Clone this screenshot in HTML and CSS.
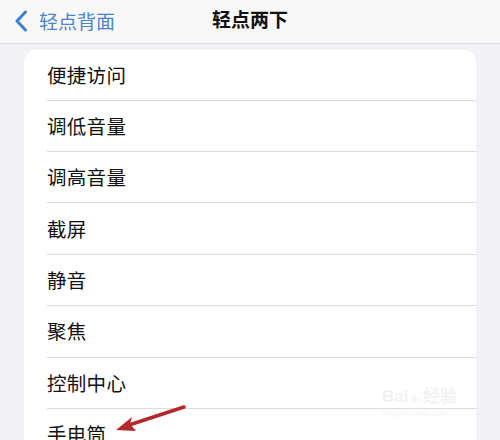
FILE: index.html
```html
<!DOCTYPE html>
<html lang="zh-CN">
<head>
    <meta charset="UTF-8">
    <meta name="viewport" content="width=device-width, initial-scale=1.0">
    <title>轻点两下</title>
    <link rel="stylesheet" href="styles.css">
</head>
<body>
    <div class="nav-bar">
        <a class="back" href="#">
            <svg class="chevron" width="14" height="22" viewBox="0 0 14 22">
                <path d="M11.5 2 L3 11 L11.5 20" fill="none" stroke="#3d7fd0" stroke-width="3" stroke-linecap="round" stroke-linejoin="round"/>
            </svg>
            <span>轻点背面</span>
        </a>
        <h1>轻点两下</h1>
    </div>

    <div class="content">
        <ul class="list">
            <li>便捷访问</li>
            <li>调低音量</li>
            <li>调高音量</li>
            <li>截屏</li>
            <li>静音</li>
            <li>聚焦</li>
            <li>控制中心</li>
            <li>手电筒</li>
        </ul>
    </div>

    <!-- annotation arrow -->
    <svg class="arrow" width="500" height="440" viewBox="0 0 500 440">
        <path d="M184 407 L126 426" stroke="#b3282b" stroke-width="3.5" stroke-linecap="round"/>
        <path d="M116 430 L132 417 L130 424 L136 431 Z" fill="#b3282b"/>
    </svg>

    <div class="watermark">
        <div class="wm-logo">Bai<span class="paw">du</span>经验</div>
        <div class="wm-url">jingyan.baidu.com</div>
    </div>
</body>
</html>
```

FILE: styles.css
```css
body {
    margin: 0;
    background: #f2f2f7;
    font-family: "Noto Sans CJK SC", "Noto Sans", sans-serif;
    color: #111;
    height: 440px;
    overflow: hidden;
    position: relative;
}
.nav-bar {
    height: 43px;
    background: #f8f8f9;
    border-bottom: 1px solid #dedee2;
    display: flex;
    align-items: center;
    justify-content: center;
    position: relative;
}
.back {
    position: absolute;
    left: 14px;
    top: 7px;
    display: flex;
    align-items: center;
    gap: 11px;
    color: #4a84c8;
    text-decoration: none;
    font-size: 19px;
}
.chevron {
    display: block;
}
h1 {
    margin: 0;
    font-size: 19px;
    font-weight: 700;
    color: #111;
    margin-top: -6px;
}
.content {
    padding: 6px 24px 0 24px;
}
.list {
    list-style: none;
    margin: 0;
    padding: 0 0 0 23px;
    background: #fff;
    border-radius: 12px;
}
.list li {
    height: 51.45px;
    box-sizing: border-box;
    border-bottom: 1px solid #dcdce0;
    display: flex;
    align-items: center;
    font-size: 19.5px;
    letter-spacing: 0.3px;
    padding-bottom: 1px;
}
.list li:first-child {
    height: 50.5px;
}
.arrow {
    position: absolute;
    left: 0;
    top: 0;
    pointer-events: none;
}
.watermark {
    position: absolute;
    left: 382px;
    top: 387px;
    color: rgba(200, 200, 200, 0.25);
    font-family: "Liberation Sans", sans-serif;
}
.wm-logo {
    font-size: 17px;
    font-weight: 700;
    line-height: 20px;
}
.paw {
    font-size: 9px;
    margin: 0 2px;
}
.wm-url {
    font-size: 8px;
    line-height: 10px;
}
```
